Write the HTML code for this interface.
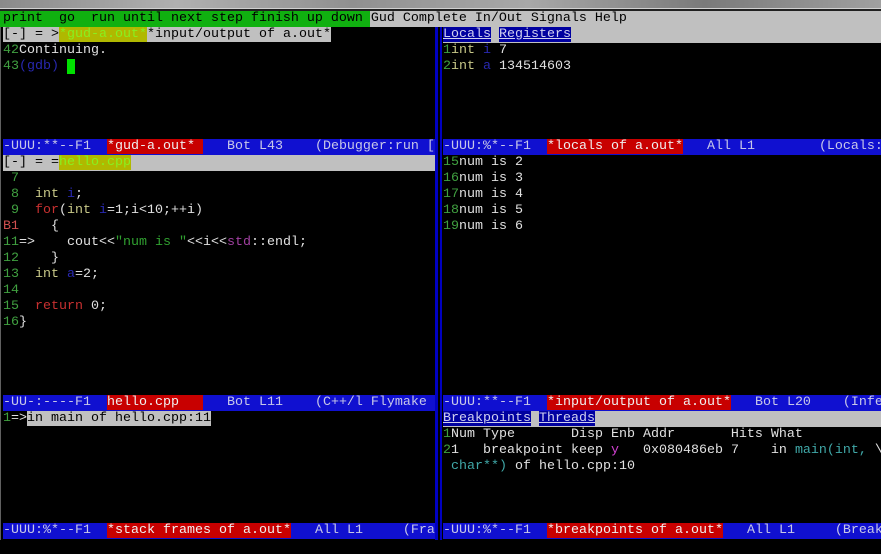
<!DOCTYPE html>
<html><head><meta charset="utf-8"><style>
html,body{margin:0;padding:0;background:#000;width:881px;height:554px;overflow:hidden;position:relative}
.r{position:absolute;height:16px;line-height:16px;white-space:pre;font-family:"Liberation Mono",monospace;font-size:13.33px;color:#e0e0e0;overflow:hidden}
.L{left:3px;width:432px}
.R{left:443px;width:438px}
.g{color:#40a040}.k{color:#c8c888}.b{color:#2828b0}.rd{color:#c83030}.s{color:#30a030}.p{color:#a040a0}.t{color:#40a8a8}.m{color:#d040d0}.bp{color:#d05050}
.ml{background:#1010d0;color:#c8c8e8}
.red{background:#c80000;color:#f0f0f0}
.gray{background:#c0c0c0;color:#000}
.tab{background:#0000a0;color:#d0d0f0;text-decoration:underline}
.hl{background:#b0b800;color:#88f020}
</style></head><body>
<div style="position:absolute;left:0;top:0;width:881px;height:8px;background:linear-gradient(90deg,#8a8a8a,#b0b0b0 20%,#909090 40%,#a8a8a8 60%,#7a7a7a 80%,#a0a0a0)"></div>
<div style="position:absolute;left:0;top:8px;width:881px;height:1px;background:#d0d0d0"></div>
<div style="position:absolute;left:0;top:9px;width:881px;height:2px;background:#202020"></div>
<div style="position:absolute;left:0;top:11px;width:881px;height:16px;background:#c0c0c0"></div>
<div style="position:absolute;left:0;top:11px;width:370px;height:16px;background:#10b010"></div>
<div class="r" style="left:3px;top:11px;color:#000">print  go  run until next step finish up down Gud Complete In/Out Signals Help</div>

<div style="position:absolute;left:0;top:27px;width:1px;height:513px;background:#606060"></div>
<div style="position:absolute;left:435px;top:27px;width:3px;height:513px;background:#0000c0"></div>
<div style="position:absolute;left:440px;top:27px;width:2px;height:513px;background:#0000c0"></div>

<div class="r L" style="top:27px"><span class="gray">[-] = &gt;</span><span class="hl">*gud-a.out*</span><span class="gray">*input/output of a.out*</span></div>
<div class="r L" style="top:43px"><span class="g">42</span>Continuing.</div>
<div class="r L" style="top:59px"><span class="g">43</span><span class="b">(gdb)</span> <span style="background:#00e000"> </span></div>
<div class="r L ml" style="top:139px">-UUU:**--F1  <span class="red">*gud-a.out* </span>   Bot L43    (Debugger:run [</div>

<div class="r L gray" style="top:155px">[-] = =<span class="hl">hello.cpp</span></div>
<div class="r L" style="top:171px"><span class="g"> 7</span></div>
<div class="r L" style="top:187px"><span class="g"> 8</span>  <span class="k">int</span> <span class="b">i</span>;</div>
<div class="r L" style="top:203px"><span class="g"> 9</span>  <span class="rd">for</span>(<span class="k">int</span> <span class="b">i</span>=1;i&lt;10;++i)</div>
<div class="r L" style="top:219px"><span class="bp">B1</span>    {</div>
<div class="r L" style="top:235px"><span class="g">11</span>=&gt;    cout&lt;&lt;<span class="s">"num is "</span>&lt;&lt;i&lt;&lt;<span class="p">std</span>::endl;</div>
<div class="r L" style="top:251px"><span class="g">12</span>    }</div>
<div class="r L" style="top:267px"><span class="g">13</span>  <span class="k">int</span> <span class="b">a</span>=2;</div>
<div class="r L" style="top:283px"><span class="g">14</span></div>
<div class="r L" style="top:299px"><span class="g">15</span>  <span class="rd">return</span> 0;</div>
<div class="r L" style="top:315px"><span class="g">16</span>}</div>
<div class="r L ml" style="top:395px">-UU-:----F1  <span class="red">hello.cpp   </span>   Bot L11    (C++/l Flymake</div>

<div class="r L" style="top:411px"><span class="g">1</span>=&gt;<span class="gray">in main of hello.cpp:11</span></div>
<div class="r L ml" style="top:523px">-UUU:%*--F1  <span class="red">*stack frames of a.out*</span>   All L1     (Fra</div>

<div class="r R gray" style="top:27px"><span class="tab">Locals</span> <span class="tab">Registers</span></div>
<div class="r R" style="top:43px"><span class="g">1</span><span class="k">int</span> <span class="b">i</span> 7</div>
<div class="r R" style="top:59px"><span class="g">2</span><span class="k">int</span> <span class="b">a</span> 134514603</div>
<div class="r R ml" style="top:139px">-UUU:%*--F1  <span class="red">*locals of a.out*</span>   All L1        (Locals: ma</div>

<div class="r R" style="top:155px"><span class="g">15</span>num is 2</div>
<div class="r R" style="top:171px"><span class="g">16</span>num is 3</div>
<div class="r R" style="top:187px"><span class="g">17</span>num is 4</div>
<div class="r R" style="top:203px"><span class="g">18</span>num is 5</div>
<div class="r R" style="top:219px"><span class="g">19</span>num is 6</div>
<div class="r R ml" style="top:395px">-UUU:**--F1  <span class="red">*input/output of a.out*</span>   Bot L20    (Infe</div>

<div class="r R gray" style="top:411px"><span class="tab">Breakpoints</span> <span class="tab">Threads</span></div>
<div class="r R" style="top:427px"><span class="g">1</span>Num Type       Disp Enb Addr       Hits What</div>
<div class="r R" style="top:443px"><span class="g">2</span>1   breakpoint keep <span class="m">y</span>   0x080486eb 7    in <span class="t">main(int, </span>\</div>
<div class="r R" style="top:459px"> <span class="t">char**)</span> of hello.cpp:10</div>
<div class="r R ml" style="top:523px">-UUU:%*--F1  <span class="red">*breakpoints of a.out*</span>   All L1     (Break</div>
</body></html>
